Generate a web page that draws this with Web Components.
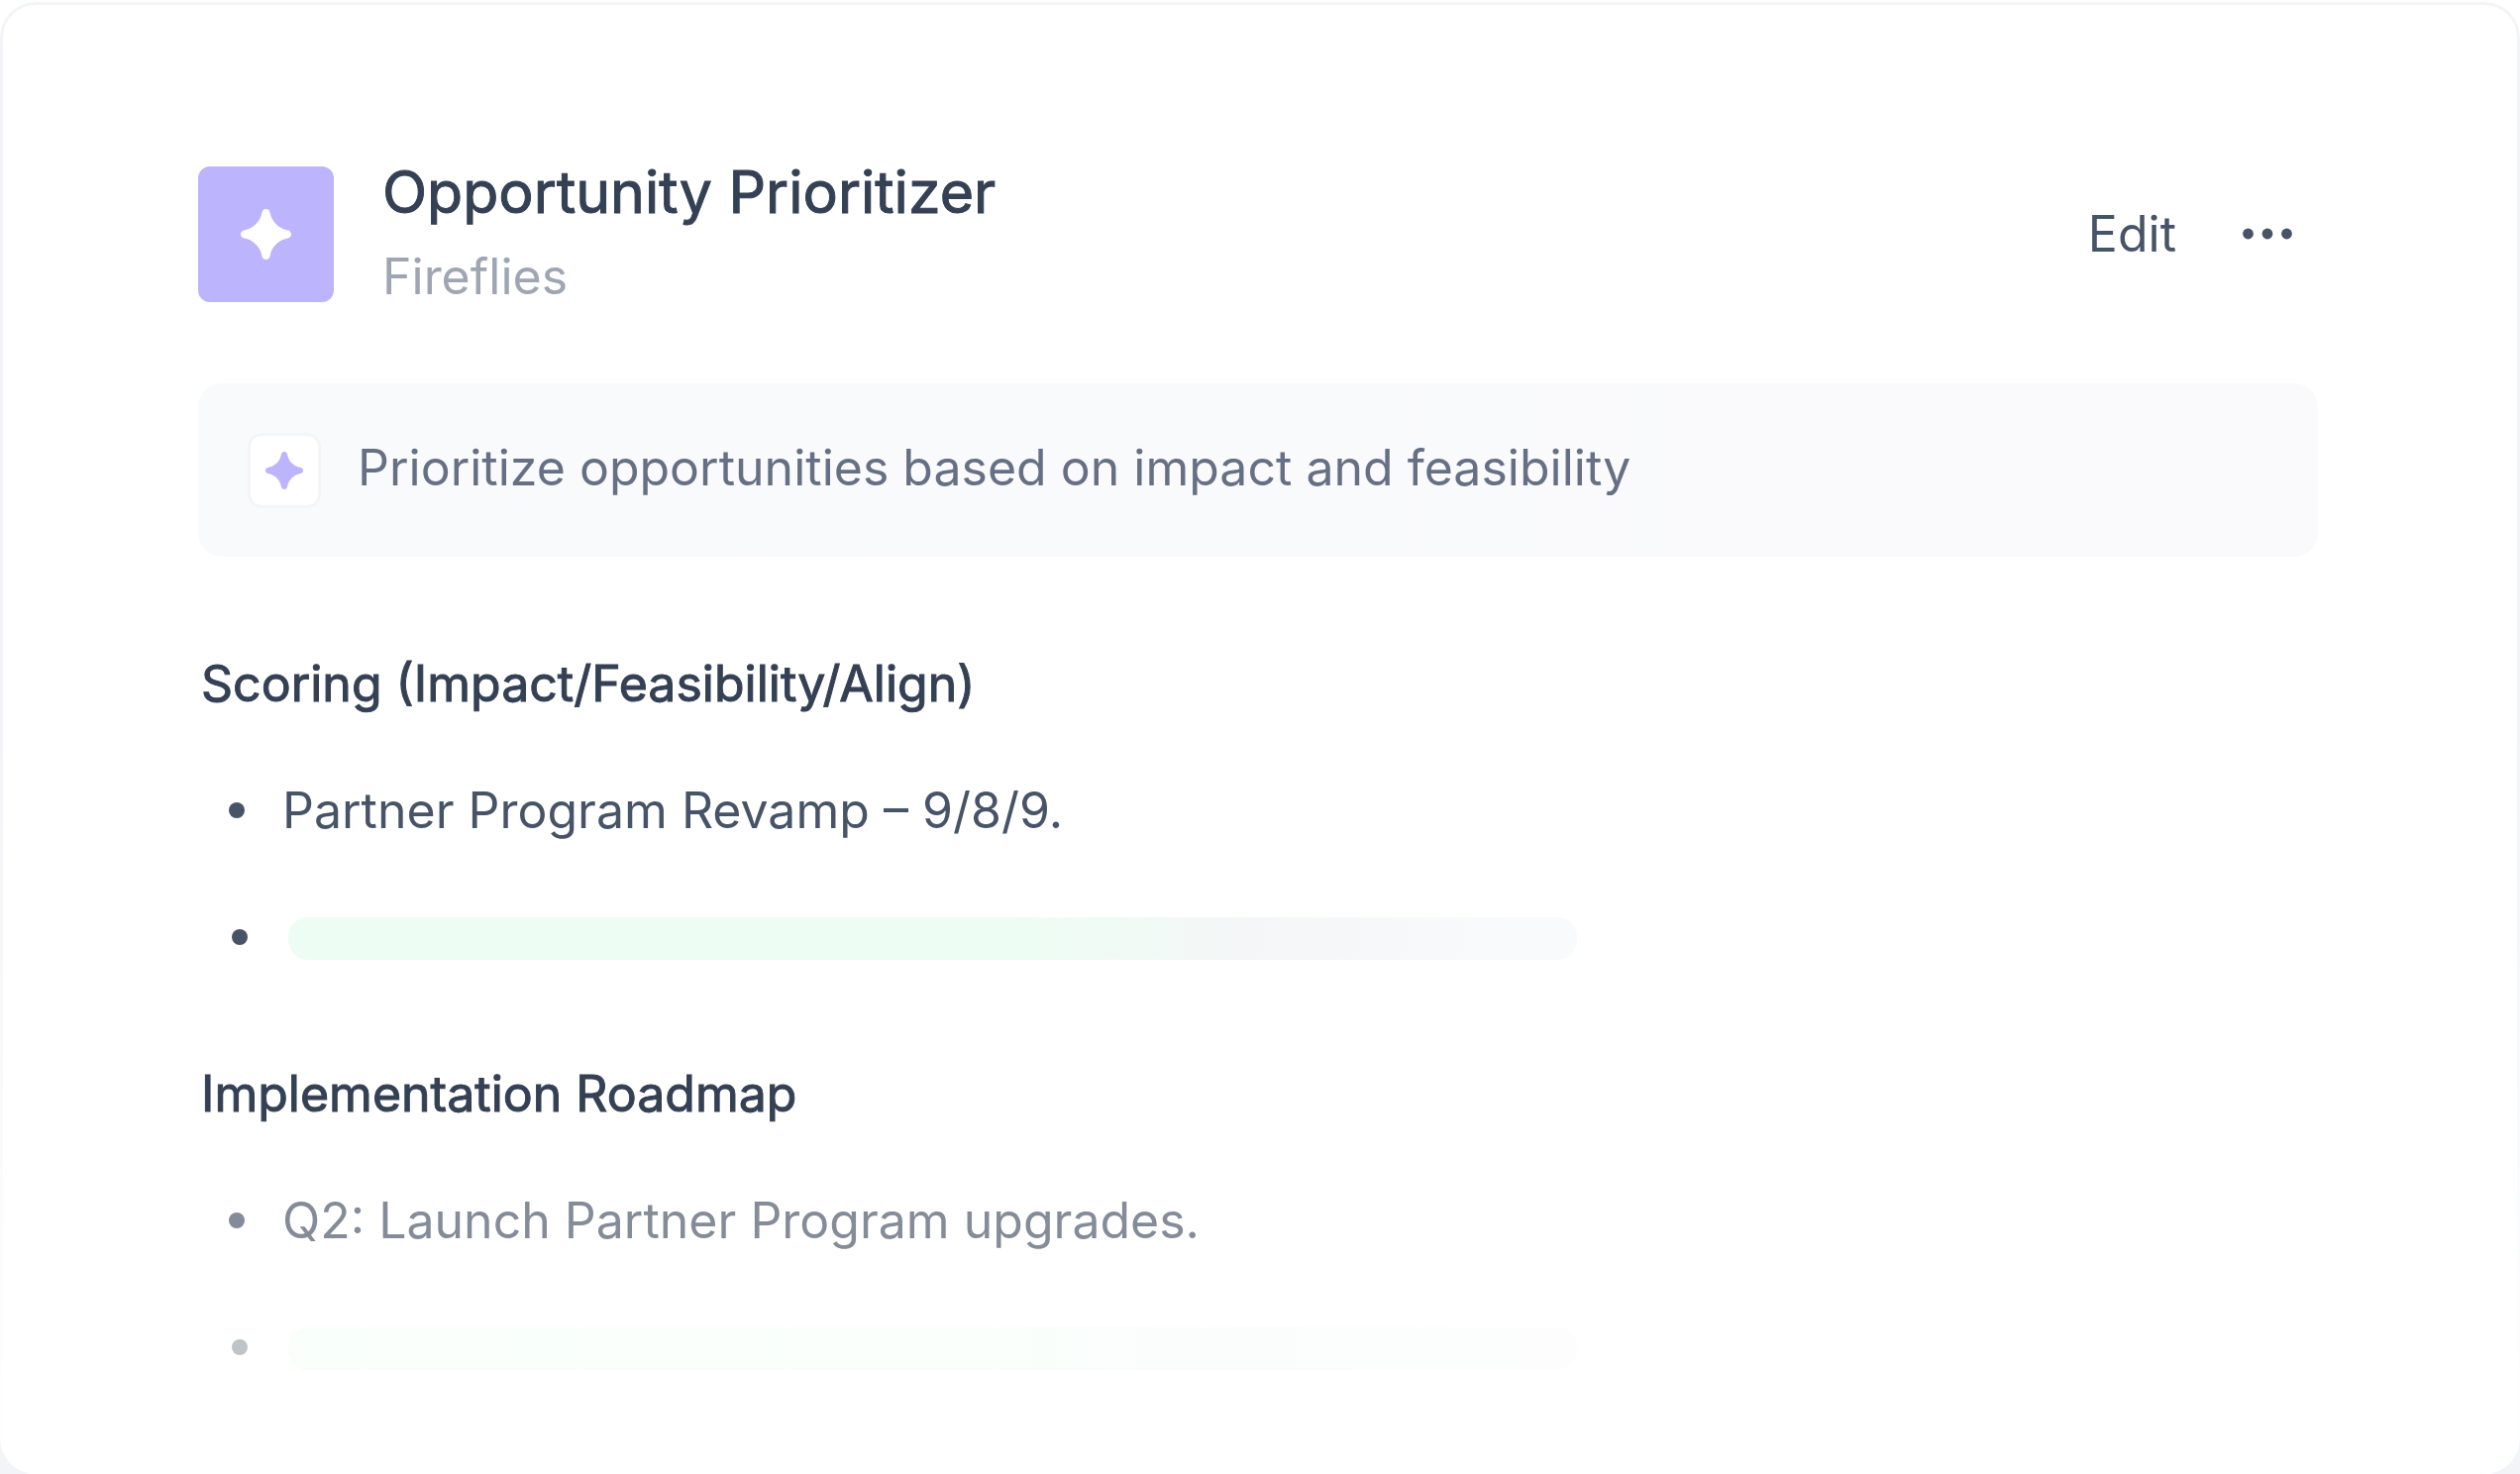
<!DOCTYPE html>
<html lang="en">
<head>
<meta charset="utf-8">
<meta name="viewport" content="width=device-width, initial-scale=1">
<title>Opportunity Prioritizer</title>
<style>
    body{
        margin: 0;
        background: #ffffff;
        font-family: Inter, "Liberation Sans", sans-serif;
        color: #344054;
    }
</style>
</head>
<body>
<app-card>
    <app-header slot="header" name="Opportunity Prioritizer" source="Fireflies"></app-header>
    <prompt-banner>Prioritize opportunities based on impact and feasibility</prompt-banner>
    <note-section heading="Scoring (Impact/Feasibility/Align)">
        <note-item>Partner Program Revamp – 9/8/9.</note-item>
        <note-item loading></note-item>
    </note-section>
    <note-section heading="Implementation Roadmap">
        <note-item style="--fade: .67">Q2: Launch Partner Program upgrades.</note-item>
        <note-item loading style="--fade: .35"></note-item>
    </note-section>
</app-card>

<script>
class SparkIcon extends HTMLElement{
    constructor(){
        super();
        this.attachShadow({mode: 'open'});
    }
    connectedCallback() {
        this.shadowRoot.innerHTML = `
        <style>
            :host{
                display: block;
                width: 51px;
                height: 51px;
            }
            svg{
                display: block;
                width: 100%;
                height: 100%;
            }
        </style>
        <svg viewBox="0 0 52 52" fill="currentColor" aria-hidden="true">
            <path d="M26 0C28.4 0 29.8 1.4 30.4 4.4C31.6 12.6 39.4 20.4 47.6 21.6C50.6 22.2 52 23.6 52 26C52 28.4 50.6 29.8 47.6 30.4C39.4 31.6 31.6 39.4 30.4 47.6C29.8 50.6 28.4 52 26 52C23.6 52 22.2 50.6 21.6 47.6C20.4 39.4 12.6 31.6 4.4 30.4C1.4 29.8 0 28.4 0 26C0 23.6 1.4 22.2 4.4 21.6C12.6 20.4 20.4 12.6 21.6 4.4C22.2 1.4 23.6 0 26 0Z"/>
        </svg>
        `;
    }
}
window.customElements.define('spark-icon', SparkIcon);

class AppCard extends HTMLElement{
    constructor(){
        super();
        this.attachShadow({mode: 'open'});
    }
    connectedCallback() {
        this.shadowRoot.innerHTML = `
        <style>
            :host{
                box-sizing: border-box;
                display: flex;
                min-height: 100vh;
                padding-top: 2px;
                background: linear-gradient(#ffffff 60%, #f2f4f7);
            }
            /* the frame fades out towards the bottom */
            .frame{
                flex: 1;
                padding: 3px 3px 0;
                border-radius: 36px;
                background: linear-gradient(#f2f4f7 50%, #ffffff);
                display: flex;
            }
            .panel{
                flex: 1;
                box-sizing: border-box;
                padding: 146px 201px 60px 197px;
                border-radius: 33px;
                background: #ffffff;
            }
        </style>
        <div class="frame">
            <main class="panel">
                <slot name="header"></slot>
                <slot></slot>
            </main>
        </div>
        `;
    }
}
window.customElements.define('app-card', AppCard);

class AppHeader extends HTMLElement{
    constructor(){
        super();
        this.attachShadow({mode: 'open'});
    }
    connectedCallback() {
        this.shadowRoot.innerHTML = `
        <style>
            :host{
                display: block;
            }
            header{
                display: flex;
                align-items: center;
            }
            .tile{
                display: flex;
                align-items: center;
                justify-content: center;
                width: 137px;
                height: 137px;
                border-radius: 12px;
                background: #bdb4fe;
                color: #ffffff;
            }
            .titles{
                flex: 1;
                padding-left: 49px;
            }
            h1{
                margin: 0;
                font-size: 59px;
                line-height: 86px;
                font-weight: 400;
                -webkit-text-stroke: 1px currentColor;
                color: #344054;
            }
            p{
                margin: 0;
                font-size: 50px;
                line-height: 84px;
                color: #9fa6b3;
            }
            button{
                border: 0;
                padding: 0;
                background: none;
                color: #475467;
                font: inherit;
                cursor: pointer;
            }
            .actions{
                display: flex;
                align-items: center;
                gap: 66px;
                padding-right: 25px;
            }
            .edit{
                font-size: 50px;
                line-height: 60px;
            }
            .more svg{
                display: block;
                width: 52px;
                height: 12px;
            }
        </style>
        <header>
            <div class="tile"><spark-icon></spark-icon></div>
            <div class="titles">
                <h1>${this.getAttribute('name')}</h1>
                <p>${this.getAttribute('source')}</p>
            </div>
            <div class="actions">
                <button class="edit" type="button">Edit</button>
                <button class="more" type="button" aria-label="More options">
                    <svg viewBox="0 0 52 12" fill="currentColor" aria-hidden="true">
                        <circle cx="6.5" cy="6" r="5.4"/>
                        <circle cx="26" cy="6" r="5.4"/>
                        <circle cx="45.5" cy="6" r="5.4"/>
                    </svg>
                </button>
            </div>
        </header>
        `;
    }
}
window.customElements.define('app-header', AppHeader);

class PromptBanner extends HTMLElement{
    constructor(){
        super();
        this.attachShadow({mode: 'open'});
    }
    connectedCallback() {
        this.shadowRoot.innerHTML = `
        <style>
            :host{
                display: flex;
                align-items: flex-start;
                gap: 37px;
                margin-top: 66px;
                padding: 50px 50px 49px;
                border-radius: 24px;
                background: linear-gradient(90deg, #f9fafb, #fafafc);
                color: #667085;
                font-size: 50px;
                line-height: 70px;
            }
            .chip{
                box-sizing: border-box;
                display: flex;
                align-items: center;
                justify-content: center;
                width: 74px;
                height: 76px;
                border: 3px solid #f4f5f8;
                border-radius: 14px;
                background: #ffffff;
                color: #bdb4fe;
            }
            spark-icon{
                width: 38px;
                height: 38px;
            }
        </style>
        <div class="chip"><spark-icon></spark-icon></div>
        <slot></slot>
        `;
    }
}
window.customElements.define('prompt-banner', PromptBanner);

class NoteSection extends HTMLElement{
    constructor(){
        super();
        this.attachShadow({mode: 'open'});
    }
    connectedCallback() {
        this.shadowRoot.innerHTML = `
        <style>
            :host{
                display: block;
                padding-top: 90px;
            }
            :host(:last-of-type){
                padding-top: 82px;
            }
            h2{
                margin: 0 0 52px;
                padding-left: 3px;
                font-size: 50px;
                line-height: 76px;
                font-weight: 400;
                -webkit-text-stroke: 1px currentColor;
                color: #344054;
            }
            .list{
                display: flex;
                flex-direction: column;
                gap: 52px;
            }
        </style>
        <h2>${this.getAttribute('heading')}</h2>
        <div class="list" role="list"><slot></slot></div>
        `;
    }
}
window.customElements.define('note-section', NoteSection);

class NoteItem extends HTMLElement{
    constructor(){
        super();
        this.attachShadow({mode: 'open'});
    }
    connectedCallback() {
        this.setAttribute('role', 'listitem');
        this.shadowRoot.innerHTML = `
        <style>
            :host{
                display: flex;
                align-items: center;
                gap: 38px;
                min-height: 76px;
                padding-left: 31px;
                color: #475467;
                font-size: 50px;
                line-height: 76px;
                opacity: var(--fade, 1);
            }
            :host([loading]){
                gap: 41px;
                padding-left: 34px;
            }
            .dot{
                width: 16px;
                height: 16px;
                border-radius: 50%;
                background: currentColor;
            }
            .bar{
                width: 1301px;
                height: 43px;
                margin-top: 3px;
                border-radius: 20px;
                background: linear-gradient(90deg, #edfdf3 56%, #f4f6f7 75%, #f9fafb 96%);
            }
        </style>
        <span class="dot"></span>
        ${this.hasAttribute('loading') ? '<div class="bar"></div>' : '<slot></slot>'}
        `;
    }
}
window.customElements.define('note-item', NoteItem);
</script>
</body>
</html>
